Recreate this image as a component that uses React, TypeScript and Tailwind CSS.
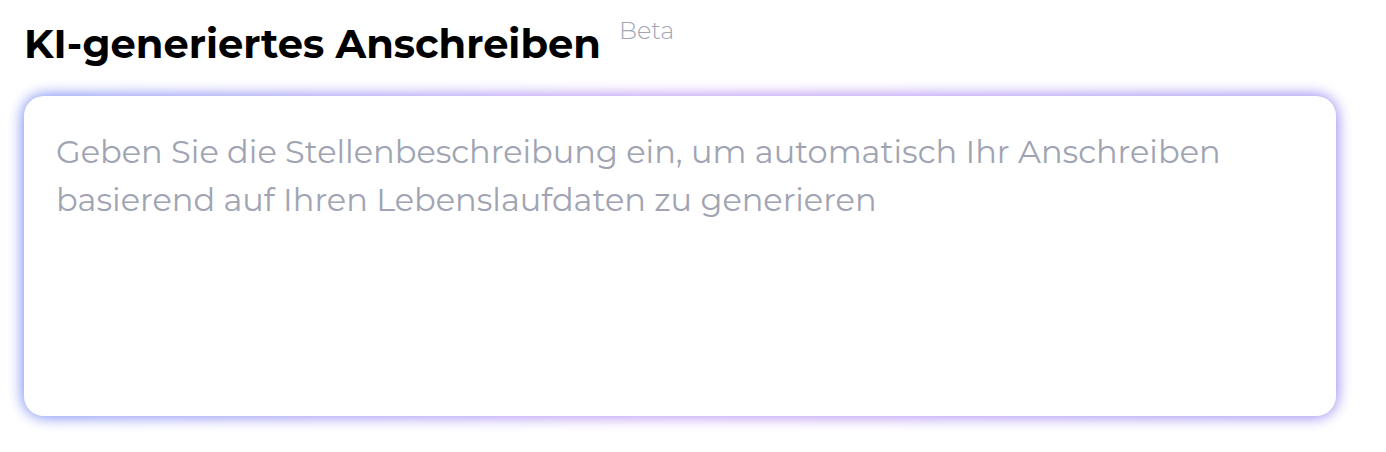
import { useState } from 'react'

const fontStack = 'font-["Montserrat","Inter","Noto_Sans",sans-serif]'

export default function App() {
  const [coverLetter, setCoverLetter] = useState('')

  return (
    <div className={`min-h-screen bg-white px-6 pt-[16px] ${fontStack}`}>
      <div className="flex items-start gap-[18px]">
        <h2 className="text-[40px] font-bold leading-[56px] text-black">KI-generiertes Anschreiben</h2>
        <span className="mt-[1px] text-[24px] font-light leading-[28px] text-[#a3a6b6]">Beta</span>
      </div>

      <div className="relative mt-[24px] w-[1312px]">
        <div className="absolute -inset-[2px] rounded-[24px] bg-gradient-to-r from-[#7f92f3] via-[#bf96f3] to-[#9a8ef0] blur-[7px]" />
        <textarea
          value={coverLetter}
          onChange={(event) => setCoverLetter(event.target.value)}
          placeholder="Geben Sie die Stellenbeschreibung ein, um automatisch Ihr Anschreiben basierend auf Ihren Lebenslaufdaten zu generieren"
          className="relative block h-[320px] w-full resize-none rounded-[20px] bg-white px-8 py-8 text-[32px] leading-[48px] text-black outline-none placeholder:text-[#a0a4b2]"
        />
      </div>
    </div>
  )
}
